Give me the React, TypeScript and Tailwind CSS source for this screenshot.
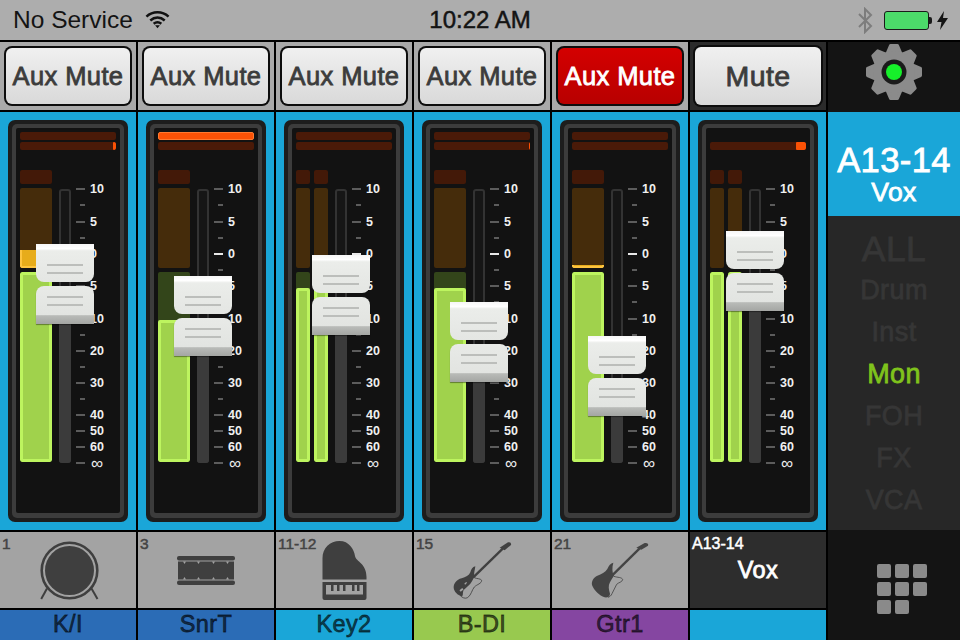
import React from "react";

type Ch = {
  top: number;
  stereo: boolean;
  oneTop?: boolean;
  bar1: boolean;
  tip: number;
  yellow: number;
  green: number[];
};

const channels: Ch[] = [
  { top: 244, stereo: false, bar1: false, tip: 3, yellow: 250, green: [272] },
  { top: 276, stereo: false, bar1: true, tip: 0, yellow: 0, green: [320] },
  { top: 255, stereo: true, bar1: false, tip: 0, yellow: 0, green: [288, 288] },
  { top: 302, stereo: false, bar1: false, tip: 1, yellow: 0, green: [288] },
  { top: 336, stereo: false, bar1: false, tip: 0, yellow: 265, green: [272] },
  { top: 231, stereo: true, oneTop: true, bar1: false, tip: 10, yellow: 0, green: [272, 272] },
];

const scale: [number, string, boolean][] = [
  [189, "10", true],
  [205, "", false],
  [222, "5", true],
  [238, "", false],
  [254, "0", true],
  [270, "", false],
  [286, "5", true],
  [302, "", false],
  [319, "10", true],
  [335, "", false],
  [351, "20", true],
  [367, "", false],
  [383, "30", true],
  [399, "", false],
  [415, "40", true],
  [431, "50", true],
  [447, "60", true],
  [463, "∞", true],
];

const med = "[-webkit-text-stroke:0.8px_currentColor] tracking-[0.4px]";
const thin = "[-webkit-text-stroke:0.5px_currentColor]";

function Meter({ width, yellow, green }: { width: string; yellow: number; green: number }) {
  return (
    <div className={`${width} flex flex-col`}>
      <div className="h-[14px] rounded-[2px] bg-[#431908]" />
      <div className="relative mt-[4px] h-[80px] overflow-hidden rounded-[2px] bg-[#452c0b]">
        {yellow > 0 && (
          <div
            className="absolute inset-x-0 bottom-0 rounded-b-[2px] border-[2px] border-t-0 border-[#fdc440] bg-[#e7ac1b]"
            style={{ top: yellow - 188 }}
          />
        )}
      </div>
      <div className="relative mt-[4px] h-[190px] overflow-hidden rounded-[2px] bg-[#33451a]">
        <div
          className="absolute inset-x-0 bottom-0 rounded-[2px] border-[3px] border-[#bdf45f] bg-[#a0d24c]"
          style={{ top: green - 272 }}
        />
      </div>
    </div>
  );
}

function Scale() {
  return (
    <div className="relative h-[300px] w-[40px]">
      {scale.map(([y, label, long], i) => {
        const bright = label === "0";
        return (
          <div key={i} className="absolute left-0 flex h-[16px] items-center" style={{ top: y - 188 - 8 }}>
            <div
              className={
                long
                  ? `h-[2px] w-[9px] ${bright ? "bg-[#e8e8e8]" : "bg-[#5c5c5c]"}`
                  : "ml-[4px] h-[2px] w-[5px] bg-[#5c5c5c]"
              }
            />
            {label === "∞" ? (
              <span className="ml-[6px] text-[17px] leading-none text-[#eeeeee]">{label}</span>
            ) : (
              label && <span className="ml-[5px] text-[12.5px] leading-none font-bold text-[#f0f0f0]">{label}</span>
            )}
          </div>
        );
      })}
    </div>
  );
}

function FaderCap({ lower }: { lower?: boolean }) {
  return (
    <div
      className={
        lower
          ? "relative h-[38px] rounded-t-[8px] bg-[linear-gradient(#e8eae7_0%,#e2e4e1_76%,#b9bbb8_78%,#a4a6a3_100%)] shadow-[0_1px_1px_rgba(0,0,0,0.4)]"
          : "relative h-[38px] rounded-b-[8px] bg-[linear-gradient(#f6f6f6_0%,#ffffff_12%,#ebedea_18%,#e4e6e3_100%)]"
      }
    >
      <div className={`absolute inset-x-[11px] h-[2px] bg-[#bcbebb] ${lower ? "top-[10px]" : "top-[20px]"}`} />
      <div className={`absolute inset-x-[11px] h-[2px] bg-[#bcbebb] ${lower ? "top-[18px]" : "top-[28px]"}`} />
    </div>
  );
}

function Strip({ ch }: { ch: Ch }) {
  const orange = "bg-[#fb5206]";
  return (
    <div className="h-[418px] bg-[#1aa6d8] pt-[8px] pl-[8px]">
      <div className="h-[402px] w-[120px] rounded-[7px] bg-[#1d1d1d] p-[4px]">
        <div className="relative h-[394px] w-[112px] rounded-[5px] bg-[#3c3c3c] px-[4px] pt-[4px] pb-[5px]">
          <div className="h-[385px] rounded-[2px] bg-[#121212] px-[4px] pt-[4px]">
            <div
              className={`h-[8px] rounded-[2px] ${
                ch.oneTop ? "" : ch.bar1 ? `${orange} border border-[#ff7a30]` : "bg-[#4a1a08]"
              }`}
            />
            <div className="relative mt-[2px] h-[8px] overflow-hidden rounded-[2px] bg-[#4a1a08]">
              {ch.tip > 0 && (
                <div className={`absolute inset-y-0 right-0 rounded-[1px] ${orange}`} style={{ width: ch.tip }} />
              )}
            </div>
            <div className="mt-[20px] flex h-[292px]">
              <div className="flex w-[32px] justify-between">
                {ch.stereo ? (
                  <>
                    <Meter width="w-[14px]" yellow={ch.yellow} green={ch.green[0]} />
                    <Meter width="w-[14px]" yellow={ch.yellow} green={ch.green[1]} />
                  </>
                ) : (
                  <Meter width="w-[32px]" yellow={ch.yellow} green={ch.green[0]} />
                )}
              </div>
              <div className="mt-[19px] ml-[7px] h-[274px] w-[12px] rounded-[3px] border-[2px] border-[#333333] bg-[#161616]" />
              <div className="mt-[18px] ml-[5px]">
                <Scale />
              </div>
            </div>
          </div>
          <div
            className="absolute left-[47px] w-[12px] rounded-b-[3px] bg-[#3b3b3b]"
            style={{ top: ch.top + 70 - 124, height: 463 - (ch.top + 70) }}
          />
          <div
            className="absolute left-[24px] flex h-[80px] w-[58px] flex-col justify-between"
            style={{ top: ch.top - 124 }}
          >
            <FaderCap />
            <FaderCap lower />
          </div>
        </div>
      </div>
    </div>
  );
}

function AuxButton({ label, red, dark }: { label: string; red?: boolean; dark?: boolean }) {
  const face = red
    ? "bg-[linear-gradient(#d40000,#b80000)] text-white"
    : "bg-[linear-gradient(#f0f0f0,#d9d9d9)] text-[#3c3c3c]";
  return (
    <div className={`h-[68px] ${dark ? "bg-[#2b2b2b] p-[3px]" : "bg-[#a9a9a9] p-[4px]"}`}>
      <div className="h-full rounded-[8px] bg-[#0d0d0d] p-[2px]">
        <div
          className={`flex h-full items-center justify-center rounded-[6px] ${dark ? "text-[28.5px]" : "text-[25.5px]"} ${med} ${face}`}
        >
          {label}
        </div>
      </div>
    </div>
  );
}

function Drum() {
  return (
    <svg width="60" height="60" viewBox="0 0 60 60" fill="none" className="mt-[1px] ml-[3px]">
      <line x1="7" y1="47.5" x2="1.2" y2="58" stroke="#3f3f3f" strokeWidth="2" />
      <line x1="51.5" y1="47.5" x2="57.5" y2="58" stroke="#3f3f3f" strokeWidth="2" />
      <circle cx="29.5" cy="29.5" r="27.8" stroke="#3f3f3f" strokeWidth="2.6" />
      <circle cx="29.5" cy="29.5" r="24.5" fill="#3f3f3f" />
    </svg>
  );
}

function Snare() {
  return (
    <svg width="58" height="29" viewBox="0 0 58 29" className="mt-[1px]">
      <rect x="0" y="0" width="58" height="4.5" rx="2" fill="#3f3f3f" />
      <rect x="0" y="24.5" width="58" height="4.5" rx="2" fill="#3f3f3f" />
      <rect x="1" y="5.5" width="56" height="18" fill="#3f3f3f" />
      {[6, 20, 35, 49].map((x) => (
        <React.Fragment key={x}>
          <path d={`M${x} 5.5 h3 l-1.5 2.5 Z`} fill="#a3a3a3" />
          <path d={`M${x} 23.5 h3 l-1.5 -2.5 Z`} fill="#a3a3a3" />
        </React.Fragment>
      ))}
    </svg>
  );
}

function Piano() {
  return (
    <svg width="45" height="59" viewBox="0 0 45 59" className="mt-[1px]">
      <path d="M0.5 38.5 V17 C0.5 7 8 0 17.5 0 C27 0 32 8 33 15 C34 21 44.5 22 44.5 36 V38.5 Z" fill="#3f3f3f" />
      <path d="M0.5 41 H44.5 V57 a2 2 0 0 1 -2 2 H2.5 a2 2 0 0 1 -2 -2 Z" fill="#3f3f3f" />
      <rect x="4" y="44" width="37" height="9.5" fill="#a3a3a3" />
      {[9, 15, 21, 30, 35].map((x) => (
        <rect key={x} x={x} y="44" width="2.5" height="6" fill="#3f3f3f" />
      ))}
    </svg>
  );
}

function Bass() {
  return (
    <svg width="63.33" height="60" viewBox="31 15 190 180" fill="none">
      <line x1="100" y1="128" x2="190" y2="40" stroke="#404040" strokeWidth="7" />
      <path d="M180 38 L205 22 Q216 20 214 30 L195 46 Z" fill="#404040" />
      <path
        d="M107 94 C98 96 94 104 92 112 C88 122 78 126 66 130 C50 134 42 146 42 158 C43 170 54 180 66 184 C72 182 68 172 72 165 C80 158 88 150 92 146 C98 138 102 130 104 122 C102 114 106 104 107 94 Z"
        fill="#404040"
      />
      <path
        d="M104 128 C112 132 122 130 126 136 C126 146 112 148 104 156 C96 166 96 178 84 188 C76 192 68 188 62 182"
        stroke="#404040"
        strokeWidth="2.5"
      />
      <rect x="60" y="162" width="11" height="6" transform="rotate(-40 65 165)" fill="#a3a3a3" />
      <rect x="74" y="143" width="8" height="4" transform="rotate(-45 78 145)" fill="#a3a3a3" />
    </svg>
  );
}

function Guitar() {
  return (
    <svg width="63.33" height="60" viewBox="10 15 190 180" fill="none">
      <line x1="82" y1="122" x2="165" y2="40" stroke="#444444" strokeWidth="7" />
      <path d="M155 38 L180 24 Q193 23 190 32 L170 44 Z" fill="#444444" />
      <path
        d="M86 83 C78 84 72 92 68 102 C62 112 50 118 38 122 C26 128 20 138 22 150 C28 166 44 182 60 187 C70 188 76 184 76 176 C72 164 70 152 76 142 C80 134 84 128 88 122 C82 112 82 96 86 83 Z"
        fill="#444444"
      />
      <path
        d="M88 124 C98 128 112 126 114 134 C112 142 102 142 96 148 C90 156 88 168 82 176 C80 182 74 186 70 187"
        stroke="#444444"
        strokeWidth="2.5"
      />
    </svg>
  );
}

function Settings() {
  const teeth = [0, 1, 2, 3, 4, 5, 6, 7];
  return (
    <svg width="58" height="58" viewBox="0 0 58 58">
      {teeth.map((t) => (
        <path
          key={t}
          d="M25.5 2.5 L32.5 2.5 L37 13 L21 13 Z"
          fill="#8b8b8b"
          stroke="#8b8b8b"
          strokeWidth="3"
          strokeLinejoin="round"
          transform={`rotate(${t * 45} 29 29)`}
        />
      ))}
      <circle cx="29" cy="29" r="21" fill="#8b8b8b" />
      <circle cx="29" cy="29" r="12.5" fill="#1b1b1b" />
      <circle cx="29" cy="29" r="8" fill="#16f02a" />
    </svg>
  );
}

const cells: { num: string; icon: React.ReactNode; name: string; color: string }[] = [
  { num: "1", icon: <Drum />, name: "K/I", color: "bg-[#2b6cb6]" },
  { num: "3", icon: <Snare />, name: "SnrT", color: "bg-[#2b6cb6]" },
  { num: "11-12", icon: <Piano />, name: "Key2", color: "bg-[#1aa6d8]" },
  { num: "15", icon: <Bass />, name: "B-DI", color: "bg-[#98c94f]" },
  { num: "21", icon: <Guitar />, name: "Gtr1", color: "bg-[#8546a1]" },
];

function Wifi() {
  return (
    <svg width="25" height="19" viewBox="0 0 26 19" fill="none" stroke="#111111" strokeWidth="2.6">
      <path d="M1.5 6.5 C8 0.5 18 0.5 24.5 6.5" />
      <path d="M5.5 10.5 C10 6.5 16 6.5 20.5 10.5" />
      <path d="M9 14 C11.5 12 14.5 12 17 14" />
      <path d="M10.5 15.5 L13 18.5 L15.5 15.5 Z" fill="#111111" stroke="none" />
    </svg>
  );
}

export default function App() {
  return (
    <div className="flex h-[640px] w-[960px] flex-col overflow-hidden bg-black font-['Liberation_Sans',Arial,sans-serif]">
      <div className="relative flex h-[40px] items-center bg-[#adadad] pl-[13px] text-[#141414]">
        <span className="text-[24.5px] leading-none">No Service</span>
        <div className="mb-[2px] ml-[12px]">
          <Wifi />
        </div>
        <span className={`absolute inset-x-0 text-center text-[24px] leading-none ${thin}`}>10:22 AM</span>
        <div className="absolute top-[7px] right-[12px] flex items-center">
          <svg width="16" height="27" viewBox="0 0 16 27" fill="none" stroke="#7d7d7d" strokeWidth="2" className="mr-[11px]">
            <path d="M2 7 L14 19 L8 25 V2 L14 8 L2 20" />
          </svg>
          <div className="flex items-center">
            <div className="h-[19px] w-[45px] rounded-[3px] border border-[#1a1a1a] bg-[#4cdb6a]" />
            <div className="h-[7px] w-[3px] rounded-r-[2px] bg-[#1a1a1a]" />
          </div>
          <svg width="11" height="19" viewBox="0 0 11 19" className="ml-[5px]">
            <path d="M7 0 L0 11 H4.5 L3 19 L11 7 H6 Z" fill="#141414" />
          </svg>
        </div>
      </div>

      <div className="mt-[2px] flex h-[598px] gap-[2px]">
        <div className="grid w-[826px] grid-cols-6 gap-x-[2px]">
          {channels.map((ch, i) => (
            <div key={i} className="flex w-[136px] flex-col gap-[2px]">
              <AuxButton label={i === 5 ? "Mute" : "Aux Mute"} red={i === 4} dark={i === 5} />
              <Strip ch={ch} />
              {i < 5 ? (
                <div className="relative flex h-[76px] items-center justify-center bg-[#a3a3a3]">
                  <span className={`absolute top-0 left-[2px] text-[15.5px] text-[#444444] ${thin}`}>{cells[i].num}</span>
                  {cells[i].icon}
                </div>
              ) : (
                <div className="relative flex h-[76px] items-center justify-center bg-[#2d2d2d] pt-[1px] text-white">
                  <span className={`absolute top-0 left-[2px] text-[16px] ${thin}`}>A13-14</span>
                  <span className={`text-[23.5px] ${med}`}>Vox</span>
                </div>
              )}
              <div
                className={`flex h-[30px] items-center justify-center text-[23.5px] text-black/60 ${med} ${
                  i < 5 ? cells[i].color : "bg-[#1aa6d8]"
                }`}
              >
                {i < 5 ? cells[i].name : ""}
              </div>
            </div>
          ))}
        </div>

        <div className="flex w-[132px] flex-col bg-[#141414]">
          <div className="flex h-[70px] items-center justify-center pb-[10px]">
            <Settings />
          </div>
          <div className={`flex h-[104px] flex-col items-center bg-[#1aa6d8] pt-[30px] text-white ${med}`}>
            <span className="text-[34.5px] leading-[36px]">A13-14</span>
            <span className="text-[26.5px] leading-[28px]">Vox</span>
          </div>
          <div className={`flex h-[314px] flex-col items-center bg-[#272727] pt-[13px] text-[27px] text-[#363636] ${med}`}>
            <span className="text-[35.5px] leading-[40px]">ALL</span>
            <span className="leading-[42px]">Drum</span>
            <span className="leading-[42px]">Inst</span>
            <span className="leading-[42px] text-[#7fc31c]">Mon</span>
            <span className="leading-[42px]">FOH</span>
            <span className="leading-[42px]">FX</span>
            <span className="leading-[42px]">VCA</span>
          </div>
          <div className="flex flex-1 items-center justify-center pt-[7px] pl-[16px]">
            <div className="grid grid-cols-3 gap-[4px]">
              {[0, 1, 2, 3, 4, 5, 6, 7].map((k) => (
                <div key={k} className="h-[14px] w-[14px] rounded-[2px] bg-[#8a8a8a]" />
              ))}
            </div>
          </div>
        </div>
      </div>
    </div>
  );
}
